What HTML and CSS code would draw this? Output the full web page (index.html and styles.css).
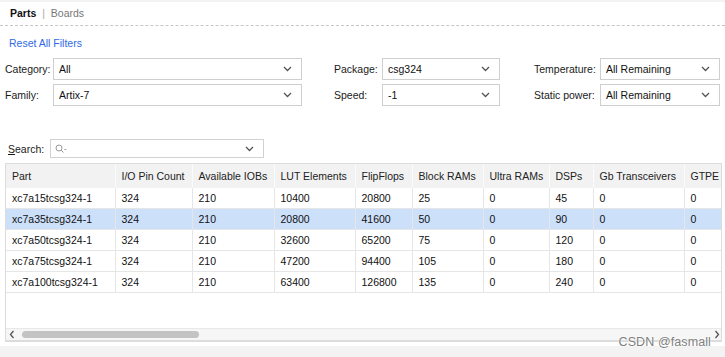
FILE: index.html
```html
<!DOCTYPE html>
<html lang="en">
<head>
  <meta charset="UTF-8">
  <title>Parts</title>
  <meta name="viewport" content="width=device-width, initial-scale=1.0">
  <link rel="stylesheet" href="styles.css">
</head>
<body>
  <div class="page">
    <div class="tabs">
      <span class="tab active">Parts</span>
      <span class="sep">|</span>
      <span class="tab">Boards</span>
    </div>

    <a class="reset" href="#">Reset All Filters</a>

    <div class="filters">
      <div class="col col-1">
        <div class="row"><label>Category:</label><div class="select"><span>All</span><svg class="chev" width="9" height="6" viewBox="0 0 9 6"><path d="M1 1l3.5 3.5L8 1"/></svg></div></div>
        <div class="row"><label>Family:</label><div class="select"><span>Artix-7</span><svg class="chev" width="9" height="6" viewBox="0 0 9 6"><path d="M1 1l3.5 3.5L8 1"/></svg></div></div>
      </div>
      <div class="col col-2">
        <div class="row"><label>Package:</label><div class="select"><span>csg324</span><svg class="chev" width="9" height="6" viewBox="0 0 9 6"><path d="M1 1l3.5 3.5L8 1"/></svg></div></div>
        <div class="row"><label>Speed:</label><div class="select"><span>-1</span><svg class="chev" width="9" height="6" viewBox="0 0 9 6"><path d="M1 1l3.5 3.5L8 1"/></svg></div></div>
      </div>
      <div class="col col-3">
        <div class="row"><label>Temperature:</label><div class="select"><span>All Remaining</span><svg class="chev" width="9" height="6" viewBox="0 0 9 6"><path d="M1 1l3.5 3.5L8 1"/></svg></div></div>
        <div class="row"><label>Static power:</label><div class="select"><span>All Remaining</span><svg class="chev" width="9" height="6" viewBox="0 0 9 6"><path d="M1 1l3.5 3.5L8 1"/></svg></div></div>
      </div>
    </div>

    <div class="search">
      <label><u>S</u>earch:</label>
      <div class="search-box">
        <svg class="mag" width="12" height="10" viewBox="0 0 12 10"><circle cx="4" cy="4" r="3"/><path d="M6.2 6.2L8.5 8.5"/><path d="M9.5 5.5h1.8"/></svg>
        <svg class="chev" width="9" height="6" viewBox="0 0 9 6"><path d="M1 1l3.5 3.5L8 1"/></svg>
      </div>
    </div>

    <div class="frame">
      <div class="grid">
        <table>
          <colgroup>
            <col style="width:109px"><col style="width:77px"><col style="width:82px"><col style="width:81px"><col style="width:57px">
            <col style="width:71px"><col style="width:66px"><col style="width:44px"><col style="width:91px"><col style="width:60px">
          </colgroup>
          <thead>
            <tr><th>Part</th><th>I/O Pin Count</th><th>Available IOBs</th><th>LUT Elements</th><th>FlipFlops</th><th>Block RAMs</th><th>Ultra RAMs</th><th>DSPs</th><th>Gb Transceivers</th><th>GTPE</th></tr>
          </thead>
          <tbody>
            <tr><td>xc7a15tcsg324-1</td><td>324</td><td>210</td><td>10400</td><td>20800</td><td>25</td><td>0</td><td>45</td><td>0</td><td>0</td></tr>
            <tr class="selected"><td>xc7a35tcsg324-1</td><td>324</td><td>210</td><td>20800</td><td>41600</td><td>50</td><td>0</td><td>90</td><td>0</td><td>0</td></tr>
            <tr><td>xc7a50tcsg324-1</td><td>324</td><td>210</td><td>32600</td><td>65200</td><td>75</td><td>0</td><td>120</td><td>0</td><td>0</td></tr>
            <tr><td>xc7a75tcsg324-1</td><td>324</td><td>210</td><td>47200</td><td>94400</td><td>105</td><td>0</td><td>180</td><td>0</td><td>0</td></tr>
            <tr><td>xc7a100tcsg324-1</td><td>324</td><td>210</td><td>63400</td><td>126800</td><td>135</td><td>0</td><td>240</td><td>0</td><td>0</td></tr>
          </tbody>
        </table>
      </div>
      <div class="hscroll">
        <svg class="arrow" width="6" height="9" viewBox="0 0 6 9"><path d="M4.5 1L1.5 4.5 4.5 8"/></svg>
        <div class="thumb"></div>
        <svg class="arrow right" width="6" height="9" viewBox="0 0 6 9"><path d="M1.5 1l3 3.5L1.5 8"/></svg>
      </div>
    </div>

    <div class="bottom"></div>
    <div class="watermark">CSDN @fasmall</div>
  </div>
</body>
</html>
```

FILE: styles.css
```css
body {
  margin: 0;
  background: #ffffff;
  font-family: "Liberation Sans", Arial, sans-serif;
  font-size: 10.5px;
  color: #111;
}
.page {
  position: relative;
  width: 725px;
  height: 357px;
  overflow: hidden;
  border-top: 2px solid #f3f3f3;
  box-sizing: border-box;
}
.tabs {
  height: 23px;
  line-height: 23px;
  padding-left: 10px;
  border-bottom: 1px dashed #c6c6c6;
}
.tab {
  color: #777;
}
.tab.active {
  color: #111;
  font-weight: bold;
}
.sep {
  color: #aaa;
  margin: 0 3px 0 3px;
}
.reset {
  display: inline-block;
  margin: 10px 0 0 9px;
  line-height: 14px;
  color: #2f6be6;
  text-decoration: none;
}
.filters {
  display: flex;
  margin-top: 8px;
  padding-left: 5px;
}
.col {
  display: flex;
  flex-direction: column;
  gap: 4px;
}
.row {
  display: flex;
  align-items: center;
}
.col-1 label { width: 48px; }
.col-1 .select { width: 249px; }
.col-2 { margin-left: 32px; }
.col-2 label { width: 48px; }
.col-2 .select { width: 118px; }
.col-3 { margin-left: 34px; }
.col-3 label { width: 66px; }
.col-3 .select { width: 120px; }
label {
  color: #1a1a1a;
}
.select {
  height: 22px;
  box-sizing: border-box;
  border: 1px solid #cfcfcf;
  background: #fff;
  display: flex;
  align-items: center;
  justify-content: space-between;
  padding: 0 9px 0 5px;
  color: #111;
}
.chev path {
  fill: none;
  stroke: #555;
  stroke-width: 1.3;
}
.search {
  display: flex;
  align-items: center;
  margin-top: 33px;
  padding-left: 8px;
}
.search label {
  width: 42px;
}
.search-box {
  width: 214px;
  height: 19px;
  box-sizing: border-box;
  border: 1px solid #d2d2d2;
  display: flex;
  align-items: center;
  justify-content: space-between;
  padding: 0 9px 0 4px;
}
.mag circle, .mag path {
  fill: none;
  stroke: #999;
  stroke-width: 1;
}
.frame {
  margin: 5px 3px 0 5px;
  border: 1px solid #dcdcdc;
  border-bottom-width: 2px;
}
.grid {
  height: 164px;
  overflow: hidden;
  background: #fff;
}
table {
  table-layout: fixed;
  border-collapse: collapse;
  width: 738px;
}
th, td {
  text-align: left;
  padding: 0 6px;
  white-space: nowrap;
  overflow: hidden;
  font-weight: normal;
}
th {
  height: 24px;
  background: #f2f2f2;
  color: #222;
  border-right: 1px solid #fbfbfb;
}
td {
  height: 20px;
  border-right: 1px solid #e6e6e6;
  border-bottom: 1px solid #e6e6e6;
  color: #111;
}
tr.selected td {
  background: #cde0fa;
}
.hscroll {
  height: 11px;
  background: #f6f6f6;
  border-top: 1px solid #e8e8e8;
  display: flex;
  align-items: center;
  position: relative;
  padding-left: 3px;
}
.arrow path {
  fill: none;
  stroke: #555;
  stroke-width: 1.3;
}
.thumb {
  width: 177px;
  height: 7px;
  margin-left: 7px;
  border-radius: 4px;
  background: #c3c3c3;
}
.arrow.right {
  margin-left: auto;
  margin-right: 1px;
}
.bottom {
  margin-top: 4px;
  height: 20px;
  background: #f3f3f3;
}
.watermark {
  position: absolute;
  right: 14px;
  top: 333px;
  font-size: 12.5px;
  color: #808080;
  text-shadow: 0 0 2px #fff, 0 0 2px #fff;
  letter-spacing: 0.1px;
}
```
